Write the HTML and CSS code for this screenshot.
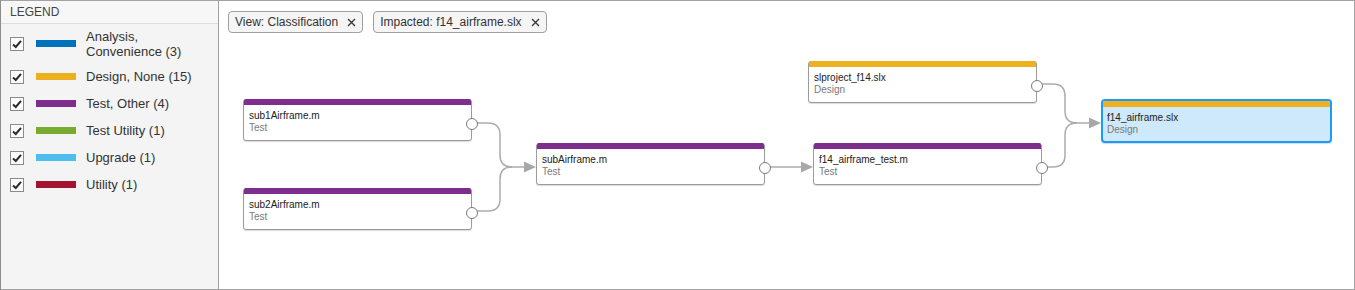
FILE: index.html
```html
<!DOCTYPE html>
<html lang="en">
<head>
    <meta charset="UTF-8">
    <title>Impact Graph</title>
    <link rel="stylesheet" href="styles.css">
</head>
<body>
    <div class="app">
        <!-- Legend panel -->
        <aside class="legend">
            <div class="legend-title">LEGEND</div>
            <ul class="legend-list">
                <li class="legend-row">
                    <span class="check"><svg viewBox="0 0 14 14" width="14" height="14"><polyline points="3,7.5 5.8,10 11,3.8"/></svg></span>
                    <span class="swatch c-blue"></span>
                    <span class="legend-label">Analysis,<br>Convenience (3)</span>
                </li>
                <li class="legend-row">
                    <span class="check"><svg viewBox="0 0 14 14" width="14" height="14"><polyline points="3,7.5 5.8,10 11,3.8"/></svg></span>
                    <span class="swatch c-yellow"></span>
                    <span class="legend-label">Design, None (15)</span>
                </li>
                <li class="legend-row">
                    <span class="check"><svg viewBox="0 0 14 14" width="14" height="14"><polyline points="3,7.5 5.8,10 11,3.8"/></svg></span>
                    <span class="swatch c-purple"></span>
                    <span class="legend-label">Test, Other (4)</span>
                </li>
                <li class="legend-row">
                    <span class="check"><svg viewBox="0 0 14 14" width="14" height="14"><polyline points="3,7.5 5.8,10 11,3.8"/></svg></span>
                    <span class="swatch c-green"></span>
                    <span class="legend-label">Test Utility (1)</span>
                </li>
                <li class="legend-row">
                    <span class="check"><svg viewBox="0 0 14 14" width="14" height="14"><polyline points="3,7.5 5.8,10 11,3.8"/></svg></span>
                    <span class="swatch c-cyan"></span>
                    <span class="legend-label">Upgrade (1)</span>
                </li>
                <li class="legend-row">
                    <span class="check"><svg viewBox="0 0 14 14" width="14" height="14"><polyline points="3,7.5 5.8,10 11,3.8"/></svg></span>
                    <span class="swatch c-red"></span>
                    <span class="legend-label">Utility (1)</span>
                </li>
            </ul>
        </aside>

        <!-- Graph area -->
        <main class="canvas">
            <div class="filters">
                <span class="tag">View: Classification <svg class="tag-x" viewBox="0 0 9 9" width="9" height="9"><path d="M1 1 L8 8 M8 1 L1 8"/></svg></span>
                <span class="tag">Impacted: f14_airframe.slx <svg class="tag-x" viewBox="0 0 9 9" width="9" height="9"><path d="M1 1 L8 8 M8 1 L1 8"/></svg></span>
            </div>

            <div class="graph">
                <svg class="edges" width="1134" height="248">
                    <path d="M258 82 H269 Q281 82 281 94 V114 Q281 126 293 126 H306"/>
                    <path d="M258 170 H269 Q281 170 281 158 V138 Q281 126 293 126"/>
                    <path d="M550 126 H583"/>
                    <path d="M822 43 H834 Q846 43 846 55 V70 Q846 82 858 82 H871"/>
                    <path d="M827 126 H834 Q846 126 846 114 V94 Q846 82 858 82"/>
                    <polygon points="305,120.5 317,126 305,131.5"/>
                    <polygon points="582,120.5 594,126 582,131.5"/>
                    <polygon points="870,76.5 882,82 870,87.5"/>
                </svg>

                <div class="node" style="left: 24px; top: 58px;">
                    <div class="node-bar c-purple"></div>
                    <div class="node-name">sub1Airframe.m</div>
                    <div class="node-type">Test</div>
                    <span class="port"></span>
                </div>
                <div class="node" style="left: 24px; top: 147px;">
                    <div class="node-bar c-purple"></div>
                    <div class="node-name">sub2Airframe.m</div>
                    <div class="node-type">Test</div>
                    <span class="port"></span>
                </div>
                <div class="node" style="left: 317px; top: 102px;">
                    <div class="node-bar c-purple"></div>
                    <div class="node-name">subAirframe.m</div>
                    <div class="node-type">Test</div>
                    <span class="port"></span>
                </div>
                <div class="node" style="left: 594px; top: 102px;">
                    <div class="node-bar c-purple"></div>
                    <div class="node-name">f14_airframe_test.m</div>
                    <div class="node-type">Test</div>
                    <span class="port"></span>
                </div>
                <div class="node" style="left: 589px; top: 20px;">
                    <div class="node-bar c-yellow"></div>
                    <div class="node-name">slproject_f14.slx</div>
                    <div class="node-type">Design</div>
                    <span class="port"></span>
                </div>
                <div class="node selected" style="left: 882px; top: 58px;">
                    <div class="node-bar c-yellow"></div>
                    <div class="node-name">f14_airframe.slx</div>
                    <div class="node-type">Design</div>
                </div>
            </div>
        </main>
    </div>
</body>
</html>
```

FILE: styles.css
```css
/* Page reset */
* {
    margin: 0;
    padding: 0;
    box-sizing: border-box;
}

body {
    font-family: "Liberation Sans", Arial, sans-serif;
    color: #333;
    background: #fff;
}

.app {
    display: flex;
    width: 1355px;
    height: 290px;
    border: 1px solid #a3a3a3;
    border-left-color: #8c8c8c;
}

/* Legend */
.legend {
    width: 218px;
    flex: none;
    background: #f4f4f4;
    border-right: 1px solid #a3a3a3;
}

.legend-title {
    height: 23px;
    line-height: 22px;
    padding-left: 9px;
    font-size: 12px;
    color: #444;
    background: #f7f7f7;
    border-bottom: 1px solid #dcdcdc;
}

.legend-list {
    list-style: none;
}

.legend-row {
    display: flex;
    align-items: center;
    min-height: 27px;
    padding: 4.5px 0 4.5px 9px;
}

.check {
    width: 14px;
    height: 14px;
    flex: none;
    border: 1px solid #8a8a8a;
    background: #fbfbfb;
    display: flex;
    align-items: center;
    justify-content: center;
}

.check svg {
    display: block;
    margin: -1px;
}

.check polyline {
    fill: none;
    stroke: #2b2b2b;
    stroke-width: 2;
}

.swatch {
    width: 40px;
    height: 7px;
    flex: none;
    margin: 0 10px 0 12px;
}

.legend-label {
    font-size: 13px;
    line-height: 15px;
    color: #333;
}

/* Category colours */
.c-blue { background: #0072bd; }
.c-yellow { background: #edb120; }
.c-purple { background: #7e2f8e; }
.c-green { background: #77ac30; }
.c-cyan { background: #4dbeee; }
.c-red { background: #a2142f; }

/* Graph canvas */
.canvas {
    flex: 1;
    display: flex;
    flex-direction: column;
    background: #fff;
}

.filters {
    height: 40px;
    display: flex;
    align-items: flex-start;
    gap: 10px;
    padding: 10px 0 0 9px;
}

.tag {
    display: flex;
    align-items: center;
    gap: 9px;
    height: 22px;
    padding: 0 6px;
    font-size: 12px;
    color: #333;
    background: #f5f5f5;
    border: 1px solid #a0a0a0;
    border-radius: 4px;
}

.tag-x path {
    stroke: #3a3a3a;
    stroke-width: 1.4;
}

.graph {
    position: relative;
    flex: 1;
}

.edges {
    position: absolute;
    left: 0;
    top: 0;
}

.edges path {
    fill: none;
    stroke: #acacac;
    stroke-width: 1.5;
}

.edges polygon {
    fill: #a8a8a8;
}

/* Nodes */
.node {
    position: absolute;
    width: 229px;
    height: 42px;
    background: #fff;
    border: 1px solid #9c9c9c;
    border-radius: 3px;
    box-shadow: 0 1px 1px rgba(0, 0, 0, 0.15);
    padding-left: 5px;
}

.node-bar {
    height: 6px;
    margin: -1px 0 5px -5px;
    border-radius: 2px 2px 0 0;
}

.node-name {
    font-size: 10px;
    line-height: 12px;
    color: #222;
}

.node-type {
    font-size: 10px;
    line-height: 12px;
    color: #7a7a7a;
}

.port {
    position: absolute;
    right: -7px;
    top: 18px;
    width: 12px;
    height: 12px;
    border: 1px solid #7a7a7a;
    border-radius: 50%;
    background: #fff;
}

.node.selected {
    width: 231px;
    height: 44px;
    border: 2px solid #1a9bff;
    border-radius: 4px;
    background: #cde9fb;
    padding-left: 4px;
}

.node.selected .node-bar {
    margin: 0 0 5px -4px;
    border-radius: 2px 2px 0 0;
}
```
